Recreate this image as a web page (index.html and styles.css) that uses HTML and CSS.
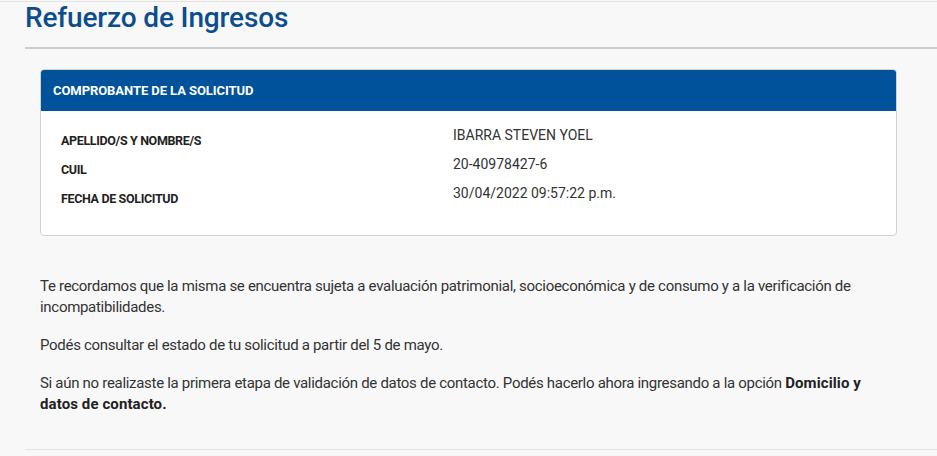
FILE: index.html
```html
<!DOCTYPE html>
<html lang="es">
<head>
<meta charset="utf-8">
<title>Refuerzo de Ingresos</title>
<link rel="stylesheet" href="styles.css">
</head>
<body>
<div class="page">
  <main class="main">
    <h1 class="title">Refuerzo de Ingresos</h1>
    <hr class="rule">
    <div class="content">
      <section class="card">
        <header class="card-header">COMPROBANTE DE LA SOLICITUD</header>
        <div class="card-body">
          <div class="row">
            <div class="label">APELLIDO/S Y NOMBRE/S</div>
            <div class="value">IBARRA STEVEN YOEL</div>
          </div>
          <div class="row">
            <div class="label">CUIL</div>
            <div class="value">20-40978427-6</div>
          </div>
          <div class="row">
            <div class="label">FECHA DE SOLICITUD</div>
            <div class="value">30/04/2022 09:57:22 p.m.</div>
          </div>
        </div>
      </section>
      <p class="text first">Te recordamos que la misma se encuentra sujeta a evaluación patrimonial, socioeconómica y de consumo y a la verificación de incompatibilidades.</p>
      <p class="text">Podés consultar el estado de tu solicitud a partir del 5 de mayo.</p>
      <p class="text">Si aún no realizaste la primera etapa de validación de datos de contacto. Podés hacerlo ahora ingresando a la opción <strong>Domicilio y datos de contacto.</strong></p>
    </div>
    <hr class="rule-bottom">
  </main>
</div>
</body>
</html>
```
FILE: styles.css
```css
* { box-sizing: border-box; }
html, body { margin: 0; padding: 0; }
body {
  background: #f8f8f8;
  font-family: Roboto, "Liberation Sans", sans-serif;
  color: #333;
}
.page {
  margin-top: 1px;
  border-top: 1px solid #e2e2e2;
  overflow: hidden;
}
.main {
  padding-left: 25px;
}
.title {
  margin: 0;
  font-size: 28px;
  line-height: 32px;
  font-weight: 500;
  color: #0b4d8d;
  letter-spacing: -0.15px;
}
.rule {
  margin: 13px 0 0 0;
  border: 0;
  height: 2px;
  background: #cccccc;
}
.content {
  padding: 20px 40px 0 15px;
}
.card {
  background: #fff;
  border: 1px solid #d2d2d2;
  border-radius: 4px;
  overflow: hidden;
}
.card-header {
  background: #00529b;
  color: #fff;
  height: 41px;
  padding: 0 12px;
  font-size: 13px;
  line-height: 41px;
  font-weight: 700;
  letter-spacing: -0.07px;
}
.card-body {
  padding: 14px 20px 23px;
}
.row {
  display: grid;
  grid-template-columns: 392px 1fr;
  height: 29px;
}
.label {
  padding-top: 6px;
  font-size: 12.5px;
  line-height: 20px;
  font-weight: 700;
  color: #222;
  letter-spacing: -0.35px;
}
.value {
  font-size: 14px;
  line-height: 20px;
  color: #333;
}
.text {
  margin: 17px 0 0 0;
  font-size: 15px;
  line-height: 21px;
  color: #333;
  letter-spacing: -0.3px;
}
.text.first { margin-top: 40px; }
.text strong { font-weight: 700; color: #222; letter-spacing: 0.1px; }
.rule-bottom {
  margin: 34px 0 0 0;
  border: 0;
  height: 1px;
  background: #e2e2e2;
}
```
